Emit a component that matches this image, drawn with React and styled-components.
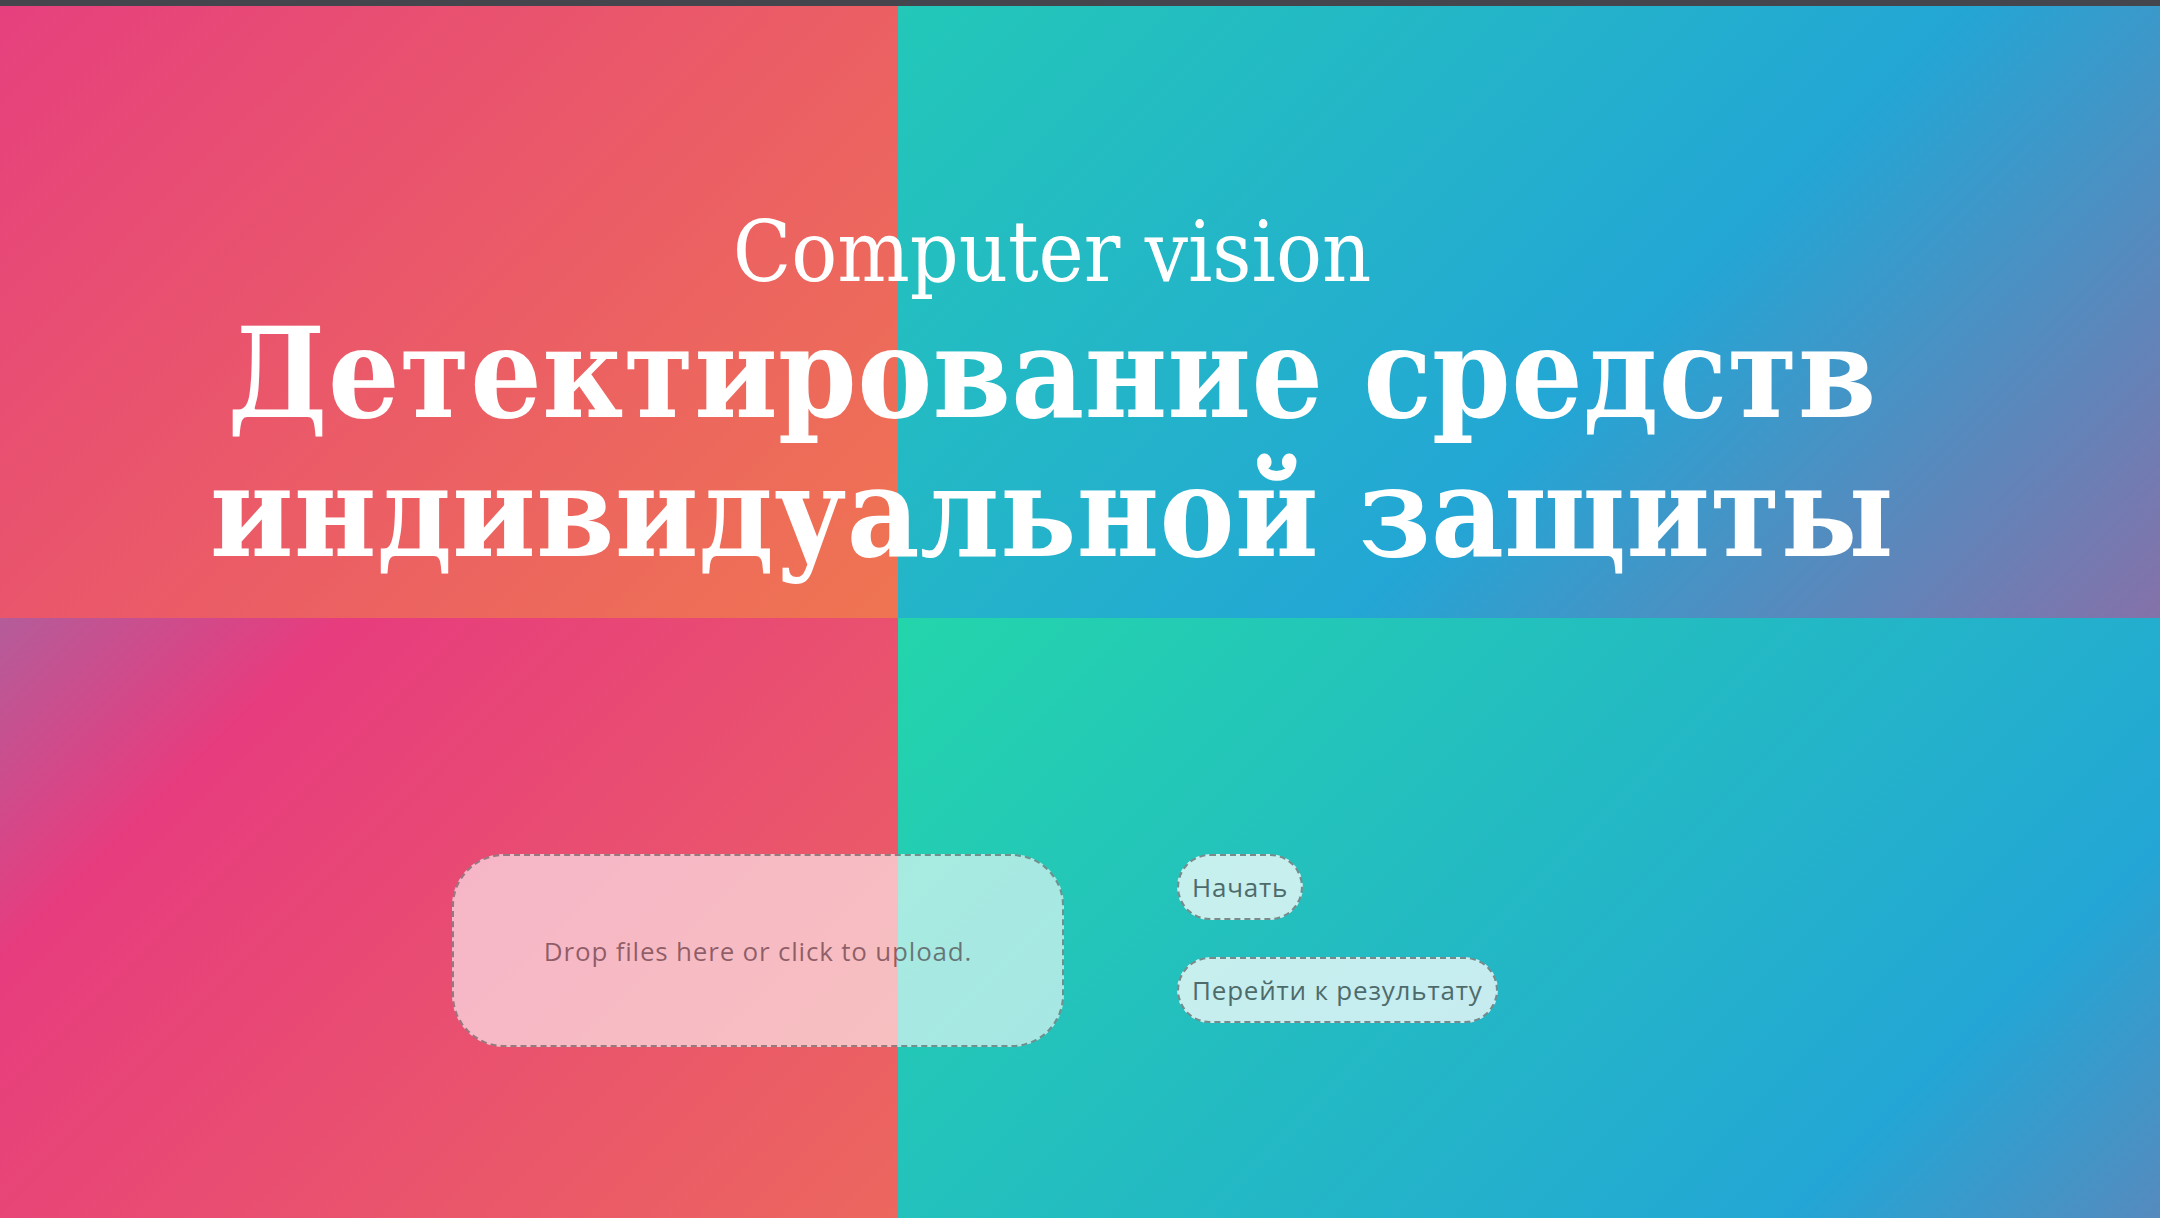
import React from 'react';
import styled, { createGlobalStyle } from 'styled-components';

const GlobalStyle = createGlobalStyle`
  html, body {
    margin: 0;
    padding: 0;
  }
  body {
    background: #45454d;
    font-family: "Open Sans", "Noto Sans", sans-serif;
  }
`;

const LEFT = 898;

const TopBar = styled.div`
  height: 6px;
  background: #45454d;
`;

const Split = styled.section`
  height: ${p => p.$height}px;
  background-image: ${p => p.$left}, ${p => p.$right};
  background-size: ${LEFT}px 100%, calc(100% - ${LEFT}px) 100%;
  background-position: left top, right top;
  background-repeat: no-repeat;
  box-sizing: border-box;
`;

const Hero = styled(Split)`
  display: flex;
  flex-direction: column;
  align-items: center;
  padding: 197px 56px 0 0;
  color: #ffffff;
  font-family: "DejaVu Serif Condensed", "DejaVu Serif", serif;
`;

const Kicker = styled.div`
  font-size: 85px;
  line-height: 98px;
  font-weight: 400;
  margin-bottom: 3px;
`;

const Title = styled.h1`
  margin: 0;
  font-size: 125px;
  line-height: 139px;
  font-weight: 700;
  letter-spacing: 0.5px;
  text-align: center;
`;

const Workspace = styled(Split)`
  display: flex;
  align-items: flex-start;
  gap: 113px;
  padding: 236px 0 0 452px;
`;

const Dropzone = styled.div`
  width: 612px;
  height: 193px;
  box-sizing: border-box;
  border: 2px dashed rgba(70, 70, 70, 0.55);
  border-radius: 52px;
  background: rgba(255, 255, 255, 0.6);
  display: flex;
  align-items: center;
  justify-content: center;
  font-size: 26px;
  letter-spacing: 0.8px;
  color: rgba(40, 0, 10, 0.5);
  cursor: pointer;
`;

const Actions = styled.div`
  display: flex;
  flex-direction: column;
  align-items: flex-start;
  gap: 37px;
`;

const ActionButton = styled.button`
  height: 66px;
  box-sizing: border-box;
  padding: 0 13px;
  border: 2px dashed rgba(70, 70, 70, 0.6);
  border-radius: 33px;
  background: rgba(255, 255, 255, 0.74);
  font-family: inherit;
  font-size: 26px;
  letter-spacing: 0.8px;
  color: #4e6b6b;
  cursor: pointer;
`;

const App = () => (
  <>
    <GlobalStyle />
    <TopBar />
    <Hero
      $height={612}
      $left="linear-gradient(-45deg, #ef7551 0%, #e6407e 100%)"
      $right="linear-gradient(-45deg, #8571a9 0%, #23a6d5 43%, #23c8b8 100%)"
    >
      <Kicker>Computer vision</Kicker>
      <Title>
        Детектирование средств
        <br />
        индивидуальной защиты
      </Title>
    </Hero>
    <Workspace
      $height={600}
      $left="linear-gradient(-45deg, #ec675e 0%, #e73c7e 77%, #b45c9a 100%)"
      $right="linear-gradient(-45deg, #568abe 0%, #23a6d5 20%, #23d5ab 100%)"
    >
      <Dropzone>Drop files here or click to upload.</Dropzone>
      <Actions>
        <ActionButton>Начать</ActionButton>
        <ActionButton>Перейти к результату</ActionButton>
      </Actions>
    </Workspace>
  </>
);

export default App;
